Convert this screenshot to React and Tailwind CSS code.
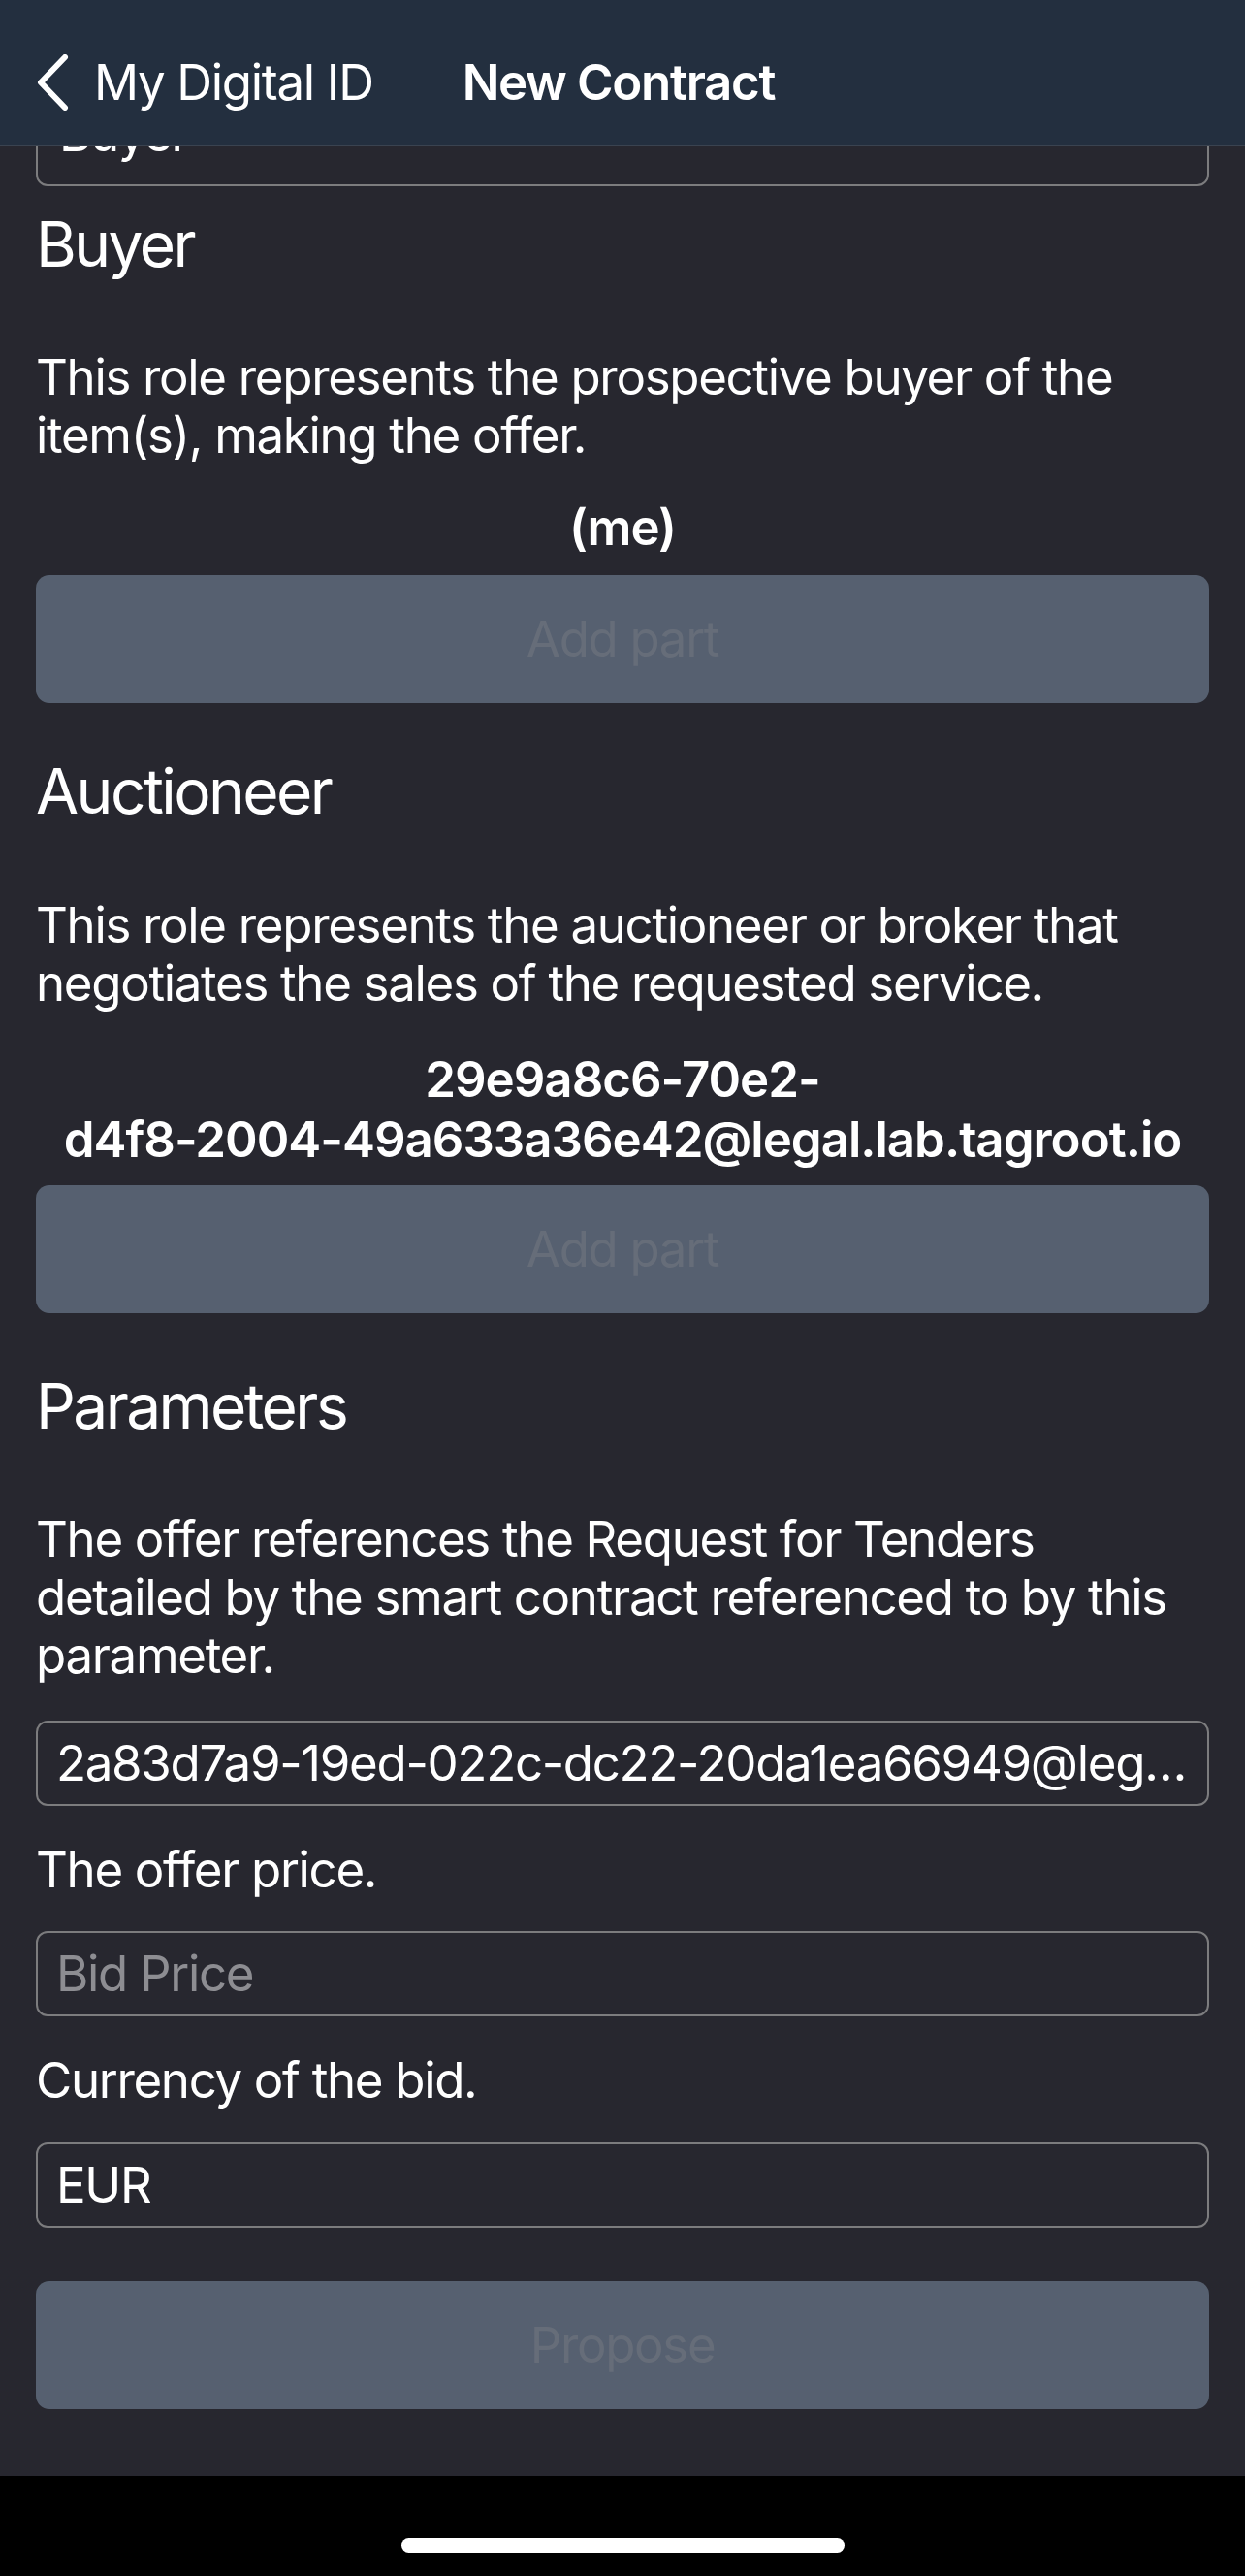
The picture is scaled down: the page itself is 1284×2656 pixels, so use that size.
import React from "react";

const font = { fontFamily: "Inter, 'Noto Sans', sans-serif" };

function Heading({ children, className = "" }) {
  return (
    <h2 className={`text-[64px] leading-[80px] font-normal text-white tracking-[-0.04em] ${className}`}>
      {children}
    </h2>
  );
}

function Para({ children, className = "" }) {
  return (
    <p className={`text-[51px] leading-[60px] text-white tracking-[-0.026em] ${className}`}>
      {children}
    </p>
  );
}

function DisabledButton({ label, className = "" }) {
  return (
    <button
      disabled
      className={`w-full h-[132px] rounded-[14px] bg-[#566070] text-[51px] text-[#666d79] tracking-[-0.026em] ${className}`}
    >
      {label}
    </button>
  );
}

function Field({ value, placeholder, className = "" }) {
  return (
    <div
      className={`h-[88px] rounded-[12px] border-2 border-[#7c7c7e] flex items-center px-[19px] overflow-hidden ${className}`}
    >
      {value ? (
        <span className="text-[51px] text-white tracking-[-0.026em] truncate">{value}</span>
      ) : (
        <span className="text-[51px] text-[#8d8d92] tracking-[-0.026em] truncate">{placeholder}</span>
      )}
    </div>
  );
}

export default function App() {
  return (
    <div className="w-[1284px] h-[2656px] bg-black flex flex-col" style={font}>
      {/* Nav bar */}
      <header className="h-[151px] shrink-0 bg-[#232f3f] flex items-center pl-[35px] pt-[20px] border-b border-[#3a4350]">
        <div className="flex items-center">
          <svg width="38" height="58" viewBox="0 0 38 58" fill="none">
            <path
              d="M32 3 L7 29 L32 55"
              stroke="white"
              strokeWidth="6"
              strokeLinecap="round"
              strokeLinejoin="round"
            />
          </svg>
          <span className="ml-[24px] text-[51px] text-white tracking-[-0.026em]">My Digital ID</span>
        </div>
        <span className="ml-[92px] text-[51px] font-semibold text-white tracking-[-0.026em]">New Contract</span>
      </header>

      {/* Scrolled content */}
      <main className="flex-1 bg-[#27272f] px-[37px] flex flex-col">
        <div className="h-[41px] overflow-hidden shrink-0">
          <div className="h-[100px] -mt-[59px] rounded-[12px] border-2 border-[#7c7c7e] px-[22px] pt-[14px]">
            <span className="text-[51px] leading-[60px] text-white tracking-[-0.026em]">Buyer</span>
          </div>
        </div>

        <Heading className="mt-[20px]">Buyer</Heading>
        <Para className="mt-[67px]">
          This role represents the prospective buyer of the item(s), making the offer.
        </Para>
        <p className="mt-[35px] text-center text-[51px] leading-[60px] font-semibold text-white tracking-[-0.02em]">
          (me)
        </p>
        <DisabledButton label="Add part" className="mt-[19px]" />

        <Heading className="mt-[51px]">Auctioneer</Heading>
        <Para className="mt-[68px]">
          This role represents the auctioneer or broker that negotiates the sales of the requested service.
        </Para>
        <p className="mt-[38px] text-center text-[51px] leading-[62px] font-semibold text-white tracking-[-0.02em] break-words">
          29e9a8c6-70e2-
          <br />
          d4f8-2004-49a633a36e42@legal.lab.tagroot.io
        </p>
        <DisabledButton label="Add part" className="mt-[16px]" />

        <Heading className="mt-[56px]">Parameters</Heading>
        <Para className="mt-[67px]">
          The offer references the Request for Tenders detailed by the smart contract referenced to by this
          parameter.
        </Para>
        <Field value="2a83d7a9-19ed-022c-dc22-20da1ea66949@legal.lab.tagroot.io" className="mt-[37px]" />
        <Para className="mt-[36px]">The offer price.</Para>
        <Field placeholder="Bid Price" className="mt-[33px]" />
        <Para className="mt-[36px]">Currency of the bid.</Para>
        <Field value="EUR" className="mt-[34px]" />
        <DisabledButton label="Propose" className="mt-[55px]" />
      </main>

      {/* Home indicator area */}
      <div className="h-[103px] shrink-0 bg-black flex justify-center">
        <div className="mt-[64px] w-[457px] h-[15px] rounded-full bg-white" />
      </div>
    </div>
  );
}
